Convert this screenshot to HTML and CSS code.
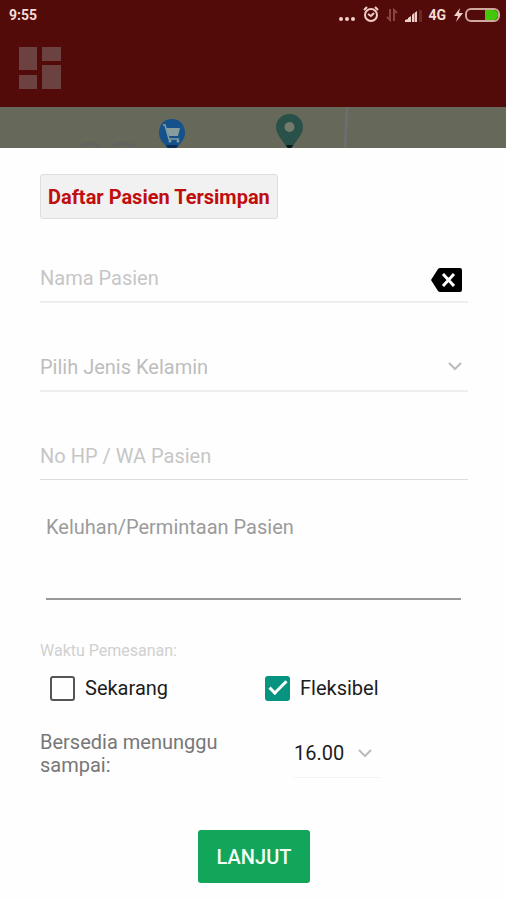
FILE: index.html
```html
<!DOCTYPE html>
<html lang="id">
<head>
<meta charset="utf-8">
<meta name="viewport" content="width=device-width, initial-scale=1">
<title>Data Pasien</title>
<link rel="stylesheet" href="styles.css">
</head>
<body>
<div class="screen">
  <header class="appbar">
    <div class="status">
      <span class="clock">9:55</span>
      <div class="indicators">
        <svg width="16" height="16" viewBox="0 0 16 16" fill="#f0d0c8"><circle cx="2" cy="12" r="2"/><circle cx="8" cy="12" r="2"/><circle cx="14" cy="12" r="2"/></svg>
        <svg class="alarm" width="16" height="18" viewBox="0 0 16 18" fill="none" stroke="#f0d0c8" stroke-width="2"><circle cx="8" cy="9" r="6"/><path d="M5 8l3 2 3-3M1 4l3-3M15 4l-3-3" stroke-width="2"/></svg>
        <svg class="data" width="12" height="14" viewBox="0 0 12 14" fill="none" stroke="#884440" stroke-width="2"><path d="M4 1v11L1 9M8 13V2l3 3"/></svg>
        <svg class="signal" width="18" height="14" viewBox="0 0 18 14"><path d="M0 14v-2l3-1v3zM3 14v-4l3-2v6zM7 14V7l2-2v9zM9.500 14V5l2.500-2v11z" fill="#f0d0c8"/><path d="M14 14V2h3v12z" fill="#6c2a25"/></svg>
        <span class="network">4G</span>
        <svg class="bolt" width="9" height="14" viewBox="0 0 9 14"><path d="M6 0L0 8h4l-2 6 7-9H5z" fill="#f0d0c8"/></svg>
        <svg width="35" height="14" viewBox="0 0 35 14"><path d="M20 2h8q5 0 5 5t-5 5h-8z" fill="#43c708"/><rect x="1" y="1" width="33" height="12" rx="5" fill="none" stroke="#cfa8a0" stroke-width="2"/></svg>
      </div>
    </div>
    <button class="menu" type="button" aria-label="Menu">
      <svg width="42" height="42" viewBox="0 0 42 42" fill="#6b423f"><path d="M0 0h18v23H0zM23 0h19v14H23zM0 28h18v14H0zM23 18h19v24H23z"/></svg>
    </button>
  </header>
  <div class="map">
    <svg width="100%" height="41" aria-hidden="true">
      <path d="M345 41l2-41" stroke="#6c6e6d" stroke-width="3"/>
      <path d="M80 39l10-3 10 4M112 39l10-3 14 3" stroke="#60645f" stroke-width="3" fill="none"/>
      <path d="M172 12c-8 0-13 6-13 14 0 5 3 9 6 12l2 3h10l2-3c3-3 6-7 6-12 0-8-5-14-13-14z" fill="#15518b"/>
      <path d="M166 38h12l-2 3h-8z" fill="#0a2d55"/>
      <path d="M166 21h14l-2 8h-9z" fill="#879da0"/>
      <path d="M163 18h2l4 14h10" fill="none" stroke="#879da0" stroke-width="1.500"/>
      <circle cx="170" cy="34" r="1.500" fill="#879da0"/><circle cx="178" cy="34" r="1.500" fill="#879da0"/>
      <path d="M289.500 7c-8 0-13.500 6-13.500 13 0 8 7 13 11 21h5c4-8 11-13 11-21 0-7-5.500-13-13.500-13z" fill="#2a5149"/>
      <circle cx="289.500" cy="20" r="5" fill="#747b6d"/>
      <path d="M286 38h7l-2 3h-3z" fill="#071713"/>
    </svg>
  </div>
  <main class="sheet">
    <form>
      <button class="saved" type="button">Daftar Pasien Tersimpan</button>
      <div class="fields">
        <div class="field">
          <input type="text" placeholder="Nama Pasien" aria-label="Nama Pasien">
          <button class="clear" type="button" aria-label="Hapus">
            <svg width="31" height="24" viewBox="0 0 31 24"><path d="M7 1Q8 0 9 0h20q2 0 2 2v20q0 2-2 2H9q-1 0-2-1L0 12z" fill="#000"/><path d="M12 6l11 12M23 6L12 18" stroke="#fff" stroke-width="3"/></svg>
          </button>
        </div>
        <div class="field">
          <select class="gender" aria-label="Pilih Jenis Kelamin"><option>Pilih Jenis Kelamin</option><option>Laki-laki</option><option>Perempuan</option></select>
          <svg class="chevron" width="14" height="9" viewBox="0 0 14 9"><path d="M1 1l6 6 6-6"/></svg>
        </div>
        <div class="field">
          <input type="tel" placeholder="No HP / WA Pasien" aria-label="No HP / WA Pasien">
        </div>
      </div>
      <textarea class="notes" placeholder="Keluhan/Permintaan Pasien" aria-label="Keluhan/Permintaan Pasien"></textarea>
      <fieldset>
        <legend>Waktu Pemesanan:</legend>
        <div class="choices">
          <label><input type="checkbox">Sekarang</label>
          <label><input type="checkbox" checked>Fleksibel</label>
        </div>
      </fieldset>
      <div class="wait">
        <label for="until">Bersedia menunggu sampai:</label>
        <div class="time">
          <select id="until"><option>16.00</option><option>17.00</option></select>
          <svg class="chevron" width="14" height="9" viewBox="0 0 14 9"><path d="M1 1l6 6 6-6"/></svg>
        </div>
      </div>
      <button class="next" type="submit">LANJUT</button>
    </form>
  </main>
</div>
</body>
</html>
```
FILE: styles.css
```css
*, *::before { box-sizing: border-box; }
body {
  margin: 0;
  background: #fefefe;
  color: #1c1c1c;
  font-family: Roboto, "Liberation Sans", sans-serif;
  font-size: 20px;
}
button, input, select, textarea { font: inherit; }
button { padding: 0; border: 0; background: none; }
svg { display: block; flex: none; }
.screen { min-height: 100vh; }
.appbar { background: #530b09; padding-bottom: 18px; }
.status {
  display: flex;
  align-items: center;
  justify-content: space-between;
  height: 30px;
  padding: 0 6px 0 9px;
  color: #f5dcd5;
  font-size: 14px;
  font-weight: 700;
}
.indicators { display: flex; align-items: center; }
.alarm { margin-left: 8px; }
.data { margin-left: 7px; }
.signal { margin-left: 7px; }
.network { margin-left: 5px; }
.bolt { margin-left: 8px; margin-right: 2px; }
.menu { display: block; margin: 17px 0 0 19px; }
.map { height: 41px; background: #66685a; }
.sheet { padding: 26px 38px 17px 40px; }
.saved {
  display: block;
  height: 45px;
  padding: 0 7px;
  border: 1px solid #dedede;
  border-radius: 3px;
  background: #f1f1f1;
  color: #c00d0d;
  font-weight: 700;
}
.fields { display: grid; gap: 40px; margin-top: 35px; }
.field {
  display: flex;
  align-items: center;
  height: 49px;
  border-bottom: 2px solid #eee;
}
.field:last-child { height: 48px; border-bottom: 1px solid #ddd; }
.field input, select {
  flex: 1;
  min-width: 0;
  padding: 0;
  border: 0;
  outline: 0;
  background: none;
  appearance: none;
}
.field input::placeholder { color: #c6c6c6; }
.gender { color: #bdbdbd; }
.clear { padding-top: 4px; margin-right: 6px; }
.chevron { fill: none; stroke: #bbb; stroke-width: 2; }
.field .chevron { margin-right: 6px; }
.notes {
  display: block;
  width: calc(100% - 13px);
  height: 85px;
  margin: 35px 7px 0 6px;
  padding: 0;
  border: 0;
  border-bottom: 2px solid #999;
  outline: 0;
  background: none;
  resize: none;
  line-height: 24px;
}
.notes::placeholder { color: #9b9b9b; }
fieldset { margin: 41px 0 0; padding: 0; border: 0; }
legend { padding: 0; color: #d0d0d0; font-size: 16px; line-height: 20px; }
.choices {
  display: grid;
  grid-template-columns: 1fr 1fr;
  gap: 12px;
  margin-top: 13px;
  padding-left: 10px;
}
.choices label { display: flex; align-items: center; gap: 10px; height: 28px; }
.choices input {
  width: 25px;
  height: 25px;
  margin: 0;
  border: 2px solid #555;
  border-radius: 3px;
  appearance: none;
}
.choices input:checked {
  border: 0;
  background: #069481;
}
.choices input:checked::before {
  content: "";
  display: block;
  width: 18px;
  height: 9px;
  margin: 5px 0 0 4px;
  border-left: 3px solid #fff;
  border-bottom: 3px solid #fff;
  transform: rotate(-45deg);
}
.wait { display: flex; align-items: center; margin-top: 28px; color: #777; line-height: 23px; }
.wait label { width: 190px; margin-right: 64px; }
.time {
  display: flex;
  align-items: center;
  width: 86px;
  height: 48px;
  border-bottom: 1px solid #f4f4f4;
}
.time select { color: #1c1c1c; }
.time .chevron { margin-right: 8px; }
.next {
  display: block;
  height: 53px;
  margin: 52px auto 0;
  padding: 0 19px;
  border-radius: 3px;
  background: #12a65a;
  color: #f4fff8;
  font-weight: 500;
}
```
